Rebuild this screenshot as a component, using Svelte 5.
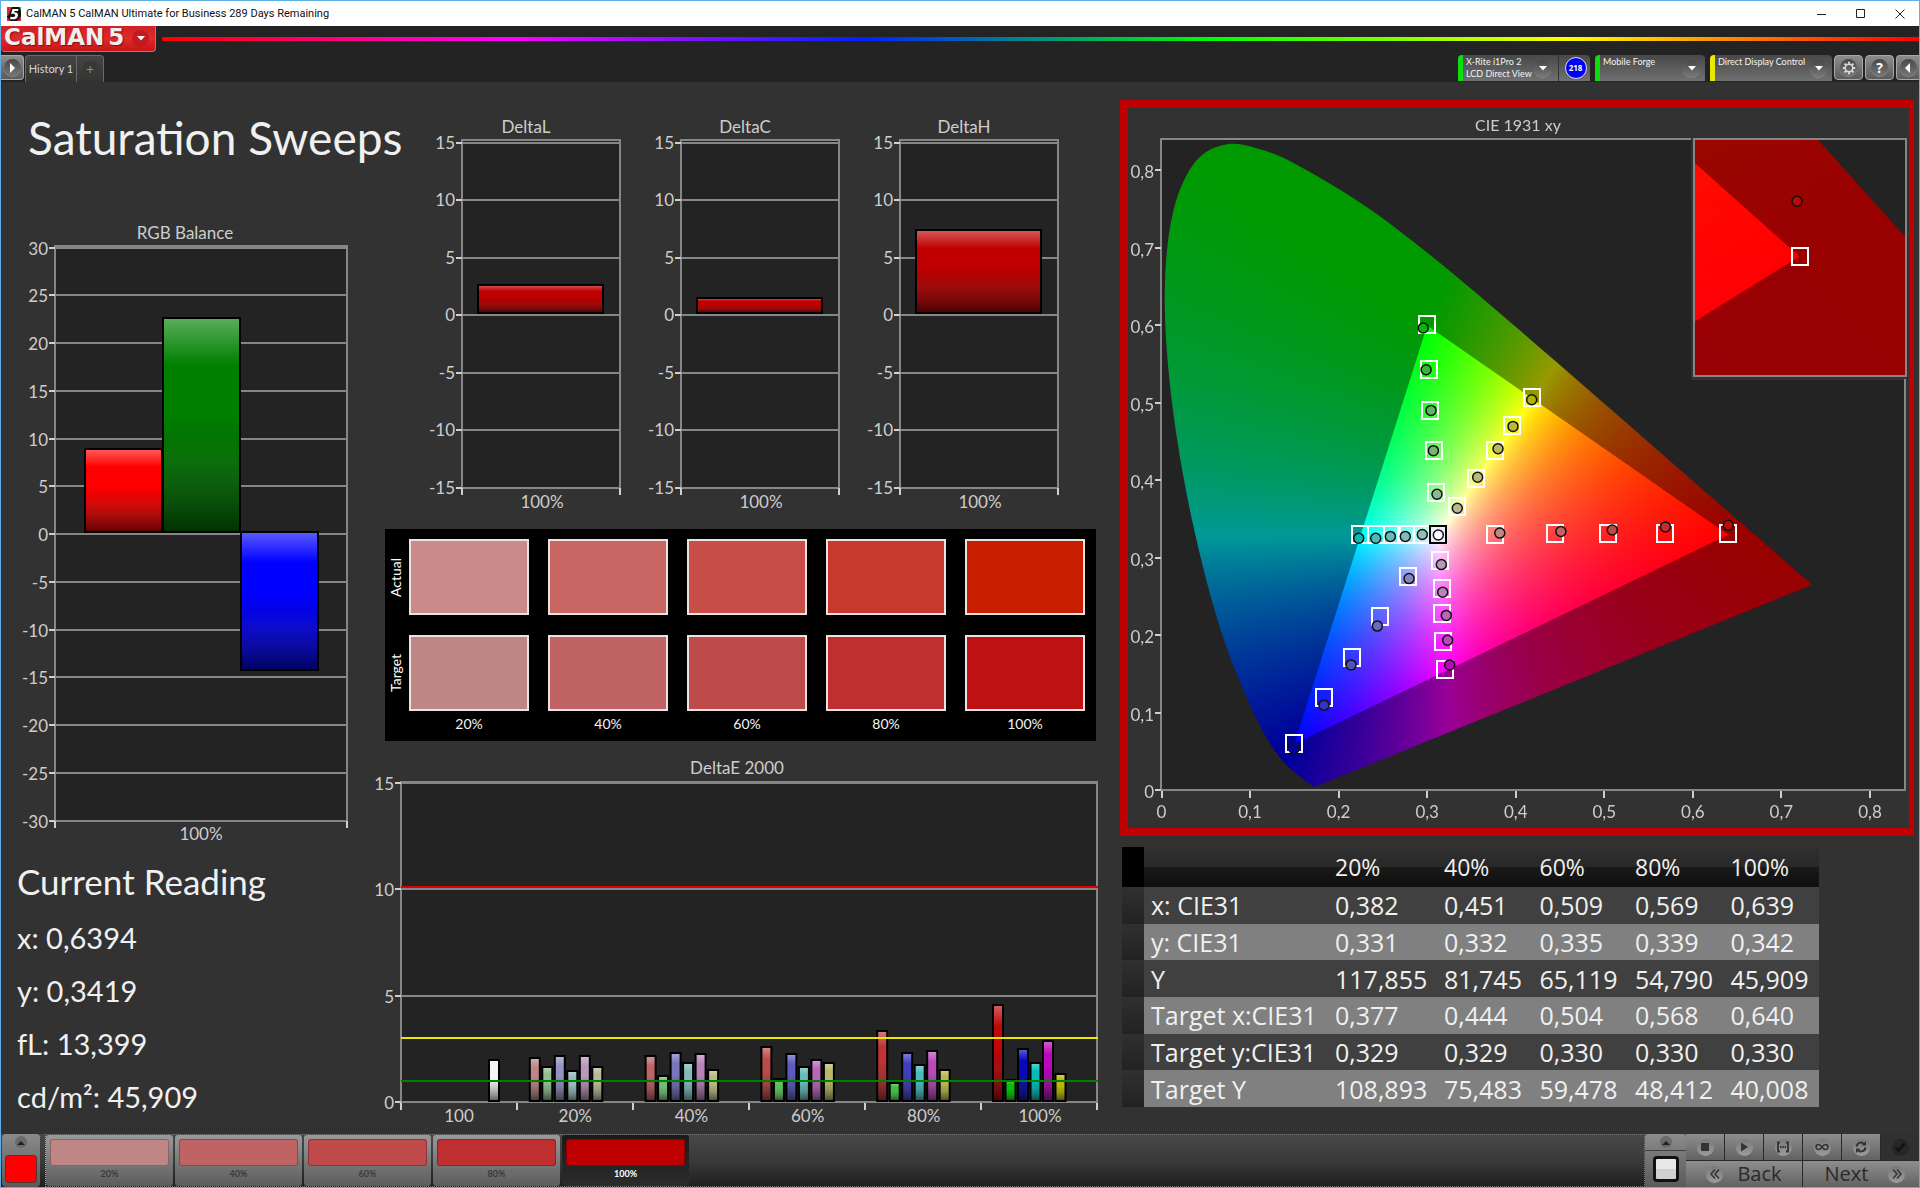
<script>
  import { onMount } from 'svelte';

  const saturations = ['20%', '40%', '60%', '80%', '100%'];
  const actualColors = ['#c98b89', '#c86664', '#c94e49', '#c7382e', '#c81f00'];
  const targetColors = ['#bf8686', '#bf6364', '#be4a4a', '#bf2f30', '#be1113'];

  const ticks = (from, to, step) => {
    const list = [];
    for (let v = from; v >= to; v -= step) list.push(v);
    return list;
  };

  const rgbTicks = ticks(30, -30, 5);
  const rgbY = (v) => Math.round(312 - v * 9.55);
  const rgbBars = [
    { x: 85, value: 8.9, color: '#ff0000' },
    { x: 163, value: 22.6, color: '#008000' },
    { x: 241, value: -14.4, color: '#0000ff' }
  ];

  const deltaTicks = ticks(15, -15, 5);
  const deltaY = (v) => Math.round(200 - v * 11.5);
  const deltas = [
    { name: 'DeltaL', value: 2.65 },
    { name: 'DeltaC', value: 1.45 },
    { name: 'DeltaH', value: 7.35 }
  ];

  const deY = (v) => Math.round(351 - v * 21.27);
  const deGroups = [
    { label: '100', values: [0, 0, 0, 0, 0, 0, 1.99], colors: ['', '', '', '', '', '', '#f4f4f4'] },
    { label: '20%', values: [2.07, 1.63, 2.15, 1.47, 2.15, 1.63], colors: ['#be8686', '#92bc92', '#9494c2', '#98babb', '#ba98ba', '#b8b898'] },
    { label: '40%', values: [2.15, 1.24, 2.32, 1.82, 2.24, 1.49], colors: ['#be6464', '#74bc74', '#7676be', '#82babb', '#ba82ba', '#b8b882'] },
    { label: '60%', values: [2.57, 1.07, 2.24, 1.63, 1.99, 1.82], colors: ['#be4b4b', '#5cbc5c', '#5c5cbe', '#66babb', '#ba66ba', '#b8b866'] },
    { label: '80%', values: [3.32, 0.91, 2.32, 1.72, 2.38, 1.49], colors: ['#be3535', '#44bc44', '#4040be', '#4ababb', '#ba4aba', '#b8b84a'] },
    { label: '100%', values: [4.56, 1.02, 2.49, 1.82, 2.87, 1.32], colors: ['#be0808', '#08bc08', '#0808be', '#08babb', '#ba08ba', '#b8b808'] }
  ];

  const rows = [
    ['x: CIE31', '0,382', '0,451', '0,509', '0,569', '0,639'],
    ['y: CIE31', '0,331', '0,332', '0,335', '0,339', '0,342'],
    ['Y', '117,855', '81,745', '65,119', '54,790', '45,909'],
    ['Target x:CIE31', '0,377', '0,444', '0,504', '0,568', '0,640'],
    ['Target y:CIE31', '0,329', '0,329', '0,330', '0,330', '0,330'],
    ['Target Y', '108,893', '75,483', '59,478', '48,412', '40,008']
  ];

  // Chromaticity plot: origin and scale of the diagram and of its magnified inset.
  const W = 781;
  const H = 720;
  const main = { px: (x) => 33.5 + x * 885.6, py: (y) => 682.4 - y * 775, ix: (p) => (p - 33.5) / 885.6, iy: (p) => (682.4 - p) / 775 };
  const zoomed = { px: (x) => 671.5 + (x - 0.64) * 4130, py: (y) => 148.5 - (y - 0.33) * 4650, ix: (p) => 0.64 + (p - 671.5) / 4130, iy: (p) => 0.33 + (148.5 - p) / 4650 };
  const inset = { x: 566, y: 31, w: 212, h: 237 };
  const cieX = [0, 1, 2, 3, 4, 5, 6, 7, 8];
  const tenth = (n) => (n === 0 ? '0' : `0,${n}`);

  const locus = [
    [0.1741, 0.005], [0.1714, 0.0051], [0.1644, 0.0109], [0.1566, 0.0177], [0.144, 0.0297], [0.1355, 0.0399],
    [0.1241, 0.0578], [0.1096, 0.0868], [0.0913, 0.1327], [0.0687, 0.2007], [0.0454, 0.295], [0.0235, 0.4127],
    [0.0082, 0.5384], [0.0039, 0.6548], [0.0139, 0.7502], [0.0389, 0.812], [0.0743, 0.8338], [0.1142, 0.8262],
    [0.1547, 0.8059], [0.2296, 0.7543], [0.3016, 0.6923], [0.3731, 0.6245], [0.4441, 0.5547], [0.5125, 0.4866],
    [0.5752, 0.4242], [0.627, 0.3725], [0.6658, 0.334], [0.6915, 0.3083], [0.719, 0.2809], [0.7347, 0.2653]
  ];
  const gamut = [[0.64, 0.33], [0.3, 0.6], [0.15, 0.06]];

  const targets = [
    [0.3, 0.6], [0.3017, 0.542], [0.3035, 0.49], [0.3074, 0.438], [0.3096, 0.384],
    [0.4187, 0.506], [0.3954, 0.47], [0.3766, 0.438], [0.3551, 0.4015], [0.3337, 0.3658],
    [0.377, 0.329], [0.444, 0.331], [0.504, 0.331], [0.568, 0.331], [0.64, 0.331],
    [0.2241, 0.329], [0.2419, 0.329], [0.26, 0.329], [0.2764, 0.329], [0.2945, 0.329],
    [0.3141, 0.2958], [0.3164, 0.26], [0.3164, 0.2276], [0.3182, 0.1913], [0.3197, 0.1557],
    [0.2787, 0.2751], [0.2471, 0.2232], [0.2155, 0.1713], [0.1838, 0.1194], [0.15, 0.06]
  ];
  const readings = [
    [0.2955, 0.5966, '#08b408'], [0.2988, 0.5428, '#3cb43c'], [0.3043, 0.4903, '#5cb85c'], [0.307, 0.4384, '#74b474'], [0.3111, 0.3821, '#92b892'],
    [0.418, 0.5041, '#b4b400'], [0.3969, 0.4697, '#b8b83c'], [0.38, 0.4409, '#b8b85c'], [0.357, 0.404, '#b8b882'], [0.334, 0.364, '#b8b898'],
    [0.382, 0.332, '#bf8686'], [0.451, 0.334, '#bf6364'], [0.509, 0.336, '#be4a4a'], [0.569, 0.34, '#bf2f30'], [0.64, 0.342, '#be0808'],
    [0.2227, 0.3252, '#08babb'], [0.2419, 0.3252, '#4ababb'], [0.2584, 0.3277, '#66babb'], [0.2753, 0.3277, '#82babb'], [0.2945, 0.3302, '#98babb'],
    [0.316, 0.2914, '#ba98ba'], [0.3175, 0.2557, '#ba82ba'], [0.3216, 0.2258, '#ba66ba'], [0.3231, 0.1938, '#ba4aba'], [0.3254, 0.1619, '#ba08ba'],
    [0.2795, 0.2733, '#8686be'], [0.2437, 0.212, '#6a6abe'], [0.214, 0.1619, '#5050be'], [0.1835, 0.11, '#3434be'], [0.1496, 0.0538, '#0000a8']
  ];

  let canvas;

  function xyToRgb(x, y) {
    const z = 1 - x - y;
    const r = Math.max(0, 3.2406 * x - 1.5372 * y - 0.4986 * z);
    const g = Math.max(0, -0.9689 * x + 1.8758 * y + 0.0415 * z);
    const b = Math.max(0, 0.0557 * x - 0.204 * y + 1.057 * z);
    const m = Math.max(r, g, b, 0.0001);
    return [r / m, g / m, b / m];
  }

  function shade(view, level) {
    const layer = document.createElement('canvas');
    layer.width = W;
    layer.height = H;
    const c = layer.getContext('2d');
    const data = c.createImageData(W, H);
    let i = 0;
    for (let row = 0; row < H; row++) {
      for (let col = 0; col < W; col++) {
        const rgb = xyToRgb(view.ix(col + 0.5), view.iy(row + 0.5));
        data.data[i++] = rgb[0] * level;
        data.data[i++] = rgb[1] * level;
        data.data[i++] = rgb[2] * level;
        data.data[i++] = 255;
      }
    }
    c.putImageData(data, 0, 0);
    return layer;
  }

  function traceLocus(c, view) {
    const p = locus.map(([x, y]) => [view.px(x), view.py(y)]);
    c.beginPath();
    c.moveTo(p[0][0], p[0][1]);
    for (let i = 0; i < p.length - 1; i++) {
      const a = p[Math.max(0, i - 1)];
      const b = p[i];
      const d = p[i + 1];
      const e = p[Math.min(p.length - 1, i + 2)];
      c.bezierCurveTo(b[0] + (d[0] - a[0]) / 6, b[1] + (d[1] - a[1]) / 6, d[0] - (e[0] - b[0]) / 6, d[1] - (e[1] - b[1]) / 6, d[0], d[1]);
    }
    c.closePath();
  }

  function traceGamut(c, view) {
    c.beginPath();
    gamut.forEach(([x, y], i) => (i ? c.lineTo(view.px(x), view.py(y)) : c.moveTo(view.px(x), view.py(y))));
    c.closePath();
  }

  function paint(c, view) {
    for (const [trace, level] of [[traceLocus, 153], [traceGamut, 255]]) {
      c.save();
      trace(c, view);
      c.clip();
      c.drawImage(shade(view, level), 0, 0);
      c.restore();
    }
  }

  onMount(() => {
    const c = canvas.getContext('2d');
    c.fillStyle = '#232323';
    c.fillRect(33, 31, 744, 652);
    paint(c, main);
    c.fillStyle = '#323232';
    c.fillRect(inset.x - 3, inset.y - 2, inset.w + 6, inset.h + 6);
    c.save();
    c.beginPath();
    c.rect(inset.x, inset.y, inset.w, inset.h);
    c.clip();
    c.fillStyle = '#232323';
    c.fillRect(inset.x, inset.y, inset.w, inset.h);
    paint(c, zoomed);
    c.restore();
  });
</script>

{#snippet bar(x, y, w, h, color)}
  <rect {x} {y} width={w} height={h} fill={color} />
  <rect {x} {y} width={w} height={h} fill="url(#gloss)" stroke="#000" stroke-width="2" />
{/snippet}

<svg class="defs" width="0" height="0" aria-hidden="true">
  <defs>
    <linearGradient id="gloss" x1="0" y1="0" x2="0" y2="1">
      <stop offset="0" stop-color="#fff" stop-opacity=".36" />
      <stop offset=".22" stop-color="#fff" stop-opacity="0" />
      <stop offset=".45" stop-color="#000" stop-opacity="0" />
      <stop offset=".65" stop-color="#333" stop-opacity=".2" />
      <stop offset="1" stop-color="#000" stop-opacity=".62" />
    </linearGradient>
  </defs>
</svg>

<div class="window">
  <header class="titlebar">
    <svg class="appicon" width="14" height="14" viewBox="0 0 14 14" aria-hidden="true">
      <rect width="14" height="14" fill="#111" />
      <path d="M0 0h5L1 9H0zM0 14v-4l4 4z" fill="#d8283c" />
      <path d="M14 14h-4l4-5z" fill="#c22a2a" />
      <path d="M14 0v4l-2-4z" fill="#36a852" />
      <path d="M11.500 2H5.500L4 7.200c1.500-.7 4.500-.6 4.200 1.300-.2 1.600-2.500 1.900-4.700 1.200L3 12c4 1 7.600 0 8-3.500.3-2.300-1.600-3.400-3.900-3.200l.3-1.200h3.500z" fill="#fff" />
    </svg>
    <span class="caption">CalMAN 5 CalMAN Ultimate for Business 289 Days Remaining</span>
    <button class="sys" aria-label="Minimize"><svg width="12" height="12" viewBox="0 0 12 12"><path d="M1 6.500h9" /></svg></button>
    <button class="sys" aria-label="Maximize"><svg width="12" height="12" viewBox="0 0 12 12"><path d="M1.500 1.500h8v8h-8z" /></svg></button>
    <button class="sys" aria-label="Close"><svg width="12" height="12" viewBox="0 0 12 12"><path d="M1.500 1.500l9 9M10.500 1.500l-9 9" /></svg></button>
  </header>

  <div class="brandbar">
    <button class="brand">
      <span>CalMAN</span><span>5</span>
      <i class="round"><svg width="10" height="6" viewBox="0 0 10 6"><path d="M1 1h8L5 5.500z" fill="#fff" /></svg></i>
    </button>
    <div class="spectrum"></div>
  </div>

  <div class="tabbar">
    <button class="square expand" aria-label="Expand"><i class="round"><svg width="8" height="10" viewBox="0 0 8 10"><path d="M2 0l5 5-5 5z" fill="#fff" /></svg></i></button>
    <button class="tab">History 1</button>
    <button class="tab add" aria-label="Add history"><i class="round dark">+</i></button>
    <div class="spacer"></div>
    <button class="device meter">
      <span class="names">X-Rite i1Pro 2<br />LCD Direct View</span>
      <i class="round"><svg width="10" height="6" viewBox="0 0 10 6"><path d="M1 1h8L5 5.500z" fill="#fff" /></svg></i>
    </button>
    <button class="count"><span>218</span></button>
    <button class="device source">
      <span class="names">Mobile Forge</span>
      <i class="round"><svg width="10" height="6" viewBox="0 0 10 6"><path d="M1 1h8L5 5.500z" fill="#fff" /></svg></i>
    </button>
    <button class="device display">
      <span class="names">Direct Display Control</span>
      <i class="round"><svg width="10" height="6" viewBox="0 0 10 6"><path d="M1 1h8L5 5.500z" fill="#fff" /></svg></i>
    </button>
    <button class="square" aria-label="Settings"><i class="round"><svg width="14" height="14" viewBox="0 0 14 14" fill="none" stroke="#ddd"><circle cx="7" cy="7" r="3.800" stroke-width="1.500" /><path d="M7 .8v2M7 11.200v2M.8 7h2M11.200 7h2M2.600 2.600L4 4M10 10l1.400 1.400M2.600 11.400L4 10M10 4l1.400-1.400" stroke-width="2" /></svg></i></button>
    <button class="square" aria-label="Help"><i class="round help">?</i></button>
    <button class="square collapse" aria-label="Collapse"><i class="round"><svg width="8" height="10" viewBox="0 0 8 10"><path d="M6 0L1 5l5 5z" fill="#fff" /></svg></i></button>
  </div>

  <main>
    <section class="left">
      <h1>Saturation Sweeps</h1>
      <svg class="chart rgb" viewBox="0 0 369 632" role="img" aria-label="RGB Balance">
        <rect x="54" y="24" width="292" height="575" class="plot" />
        <text x="184" y="17" class="mid">RGB Balance</text>
        {#each rgbTicks as t}
          <path d="M54 {rgbY(t)}H346" class="grid" />
          <path d="M48 {rgbY(t)}h6" class="tick" />
          <text x="47" y={rgbY(t) + 7} class="end">{t}</text>
        {/each}
        {#each rgbBars as b}
          {@render bar(b.x - 1, b.value > 0 ? rgbY(b.value) : rgbY(0) - 2, 77, Math.round(Math.abs(b.value) * 9.55) - (b.value > 0 ? 2 : 0), b.color)}
        {/each}
        <path d="M54 599v7M346 599v7" class="tick" />
        <text x="200" y="618" class="mid">100%</text>
      </svg>
      <div class="reading">
        <h2>Current Reading</h2>
        <p>x: 0,6394</p>
        <p>y: 0,3419</p>
        <p>fL: 13,399</p>
        <p>cd/m²: 45,909</p>
      </div>
    </section>

    <section class="middle">
      <div class="deltas">
        {#each deltas as d}
          <svg class="chart" viewBox="0 0 219 400" role="img" aria-label={d.name}>
            <rect x="37" y="25" width="158" height="348" class="plot" />
            <text x="101" y="18" class="mid">{d.name}</text>
            {#each deltaTicks as t}
              <path d="M37 {deltaY(t)}H195" class="grid" />
              <path d="M31 {deltaY(t)}h6" class="tick" />
              <text x="30" y={deltaY(t) + 6} class="end">{t}</text>
            {/each}
            {@render bar(53, deltaY(d.value), 125, Math.round(d.value * 11.5) - 2, '#c00000')}
            <path d="M37 373v7M195 373v7" class="tick" />
            <text x="117" y="393" class="mid">100%</text>
          </svg>
        {/each}
      </div>

      <div class="swatches">
        <div class="row">
          <span class="vertical">Actual</span>
          {#each actualColors as c}<div class="swatch" style:background={c}></div>{/each}
        </div>
        <div class="row">
          <span class="vertical">Target</span>
          {#each targetColors as c}<div class="swatch" style:background={c}></div>{/each}
        </div>
        <div class="row labels">
          <span class="vertical"></span>
          {#each saturations as s}<span>{s}</span>{/each}
        </div>
      </div>

      <svg class="chart" viewBox="0 0 750 380" role="img" aria-label="DeltaE 2000">
        <rect x="31" y="31" width="696" height="320" class="plot" />
        <text x="367" y="23" class="mid">DeltaE 2000</text>
        {#each [15, 10, 5, 0] as t}
          <path d="M31 {deY(t)}H728" class="grid" />
          <path d="M25 {deY(t)}h6" class="tick" />
          <text x="24" y={deY(t) + 7} class="end">{t}</text>
        {/each}
        {#each deGroups as g, gi}
          {#each g.values as v, i}
            {#if v}{@render bar(44 + gi * 115.8 + i * 12.5, deY(v), 10, 350 - deY(v), g.colors[i])}{/if}
          {/each}
          <text x={89 + gi * 116.2} y="371" class="mid">{g.label}</text>
        {/each}
        {#each [0, 1, 2, 3, 4, 5, 6] as n}
          <path d="M{31 + n * 116} 352v7" class="tick" />
        {/each}
        <path d="M31 {deY(10) - 2}H728" stroke="#e00000" stroke-width="2" />
        <path d="M31 {deY(3)}H728" stroke="#e8e800" stroke-width="2" />
        <path d="M31 {deY(1)}H728" stroke="#008000" stroke-width="2" />
      </svg>
    </section>

    <section class="right">
      <div class="cie">
        <canvas bind:this={canvas} width={W} height={H}></canvas>
        <svg class="chart" viewBox="0 0 781 720" role="img" aria-label="CIE 1931 xy">
          <text x="390" y="23" class="mid caption-text">CIE 1931 xy</text>
          <path d="M563 31H33V682H777V271" class="frame" />
          <rect x={inset.x} y={inset.y} width={inset.w} height={inset.h} class="frame" />
          {#each cieX as n}
            <path d="M{Math.round(main.px(n / 10))} 683v7M27 {Math.round(main.py(n / 10))}h6" class="tick" />
            <text x={main.px(n / 10)} y="710" class="mid">{tenth(n)}</text>
            <text x="26" y={main.py(n / 10) + 8} class="end">{tenth(n)}</text>
          {/each}
          {#each targets as [x, y]}
            <rect x={Math.round(main.px(x)) - 8} y={Math.round(main.py(y)) - 9} width="16" height="17" class="target" />
          {/each}
          <rect x={Math.round(main.px(0.3122)) - 8} y={Math.round(main.py(0.329)) - 9} width="16" height="17" class="target white" />
          {#each readings as [x, y, color]}
            <circle cx={main.px(x)} cy={main.py(y)} r="5" fill={color} stroke="#111" stroke-width="1.5" />
          {/each}
          <circle cx={main.px(0.3126)} cy={main.py(0.3296)} r="5" fill="#fff" stroke="#111" stroke-width="1.5" />
          <rect x={Math.round(zoomed.px(0.64)) - 8} y={Math.round(zoomed.py(0.33)) - 9} width="16" height="17" class="target" />
          <circle cx={zoomed.px(0.6394)} cy={zoomed.py(0.3419)} r="5" fill="#be0808" stroke="#111" stroke-width="1.5" />
        </svg>
      </div>

      <table>
        <colgroup>
          <col class="c-strip" /><col class="c-name" /><col class="c-first" /><col /><col /><col /><col />
        </colgroup>
        <thead>
          <tr><td class="strip"></td><th></th>{#each saturations as s}<th scope="col">{s}</th>{/each}</tr>
        </thead>
        <tbody>
          {#each rows as r}
            <tr><td class="strip"></td><th scope="row">{r[0]}</th>{#each r.slice(1) as v}<td>{v}</td>{/each}</tr>
          {/each}
        </tbody>
      </table>
    </section>
  </main>

  <footer>
    <button class="current" aria-label="Current pattern">
      <i class="up"><svg width="8" height="5" viewBox="0 0 8 5"><path d="M0 5l4-4 4 4z" /></svg></i>
      <span class="chip"></span>
    </button>
    <div class="patterns">
      {#each saturations as s, i}
        <button class="pattern" class:active={i === 4}>
          <span class="fill" style:background={i === 4 ? '#c00000' : targetColors[i]}></span>
          <span>{s}</span>
        </button>
      {/each}
    </div>
    <div class="view">
      <button class="viewup" aria-label="Show patterns"><i class="up"><svg width="8" height="5" viewBox="0 0 8 5"><path d="M0 5l4-4 4 4z" /></svg></i></button>
      <button class="window-pattern" aria-label="Pattern window"><span></span></button>
    </div>
    <div class="controls">
      <div class="tools">
        <button aria-label="Stop"><i class="disc"><svg width="16" height="16" viewBox="0 0 16 16"><path d="M4 4h8v8H4z" fill="#333" /></svg></i></button>
        <button aria-label="Play"><i class="disc"><svg width="16" height="16" viewBox="0 0 16 16"><path d="M5 3.500l7 4.500-7 4.500z" fill="#333" /></svg></i></button>
        <button aria-label="Read series"><i class="disc"><svg width="16" height="16" viewBox="0 0 16 16" fill="none" stroke="#333" stroke-width="1.800"><path d="M5 3.500H3v9h2M11 3.500h2v9h-2M5 8h1.500M7.300 8h1.500M9.600 8H11" /></svg></i></button>
        <button aria-label="Read continuously"><i class="disc"><svg width="16" height="16" viewBox="0 0 16 16" fill="none" stroke="#333" stroke-width="1.600"><path d="M8 8C6.500 6 5.500 5.500 4.500 5.500a2.500 2.500 0 0 0 0 5C5.500 10.500 6.500 10 8 8s2.500-2.500 3.500-2.500a2.500 2.500 0 0 1 0 5C10.500 10.500 9.500 10 8 8z" /></svg></i></button>
        <button aria-label="Refresh"><i class="disc"><svg width="16" height="16" viewBox="0 0 16 16" fill="none" stroke="#333" stroke-width="2"><path d="M3.500 7.500A4.500 4.500 0 0 1 11 4.800M12.500 8.500A4.500 4.500 0 0 1 5 11.200" /><path d="M13 2v4.500H8.500zM3 14V9.500h4.500z" fill="#333" stroke="none" /></svg></i></button>
        <button class="off" aria-label="Accept"><i class="disc"><svg width="16" height="16" viewBox="0 0 16 16" fill="none" stroke="#111" stroke-width="2.500"><path d="M3.500 8.500l3 3L12.500 4.500" /></svg></i></button>
      </div>
      <div class="nav">
        <button><i class="disc"><svg width="14" height="14" viewBox="0 0 14 14" fill="none" stroke="#333" stroke-width="1.500"><path d="M7 2.500L3 7l4 4.500M11 2.500L7 7l4 4.500" /></svg></i><span>Back</span></button>
        <button><span>Next</span><i class="disc"><svg width="14" height="14" viewBox="0 0 14 14" fill="none" stroke="#333" stroke-width="1.500"><path d="M3 2.500L7 7l-4 4.500M7 2.500L11 7l-4 4.500" /></svg></i></button>
      </div>
    </div>
  </footer>
</div>

<style>
  :global(body) { margin: 0; background: #323232; }
  button { margin: 0; padding: 0; border: 0; background: none; color: inherit; font: inherit; cursor: pointer; }
  i { font-style: normal; }
  .defs { position: absolute; }

  .window {
    box-sizing: border-box;
    min-height: 100vh;
    display: flex;
    flex-direction: column;
    border: 1px solid #5eb0e4;
    background: #323232;
    color: #f0f0f0;
    font-family: Lato, "Open Sans", sans-serif;
    overflow: hidden;
  }

  .titlebar { display: flex; align-items: center; height: 25px; background: #fff; color: #111; font: 11px/16px Roboto, sans-serif; padding-left: 6px; }
  .caption { flex: 1; padding-left: 5px; }
  .sys { width: 39px; height: 24px; display: grid; place-items: center; }
  .sys svg { fill: none; stroke: #222; stroke-width: 1; }

  .brandbar { display: flex; height: 29px; background: #232323; }
  .brand {
    box-sizing: border-box;
    width: 155px; height: 26px; flex: none;
    display: flex; align-items: center; gap: 4px;
    padding: 0 0 4px 3px;
    border: solid #9a8080; border-width: 0 1px 1px 0;
    border-radius: 0 0 4px 4px;
    background: linear-gradient(#cf2126, #e02a2c 50%, #c81418);
    color: #f0eeee;
    font: bold 23px/22px "DejaVu Sans", sans-serif;
    text-shadow: 1px 1px 1px #7a1010;
  }
  .brand .round { background: #c41a1e; box-shadow: none; margin: 3px 0 0 4px; }
  .spectrum { flex: 1; height: 4px; margin: 11px 0 0 6px; background: linear-gradient(90deg, #f00, #f0f 20%, #02f 40%, #0f0 60%, #ff0 80%, #f00); }

  .round { flex: none; display: inline-grid; place-items: center; width: 17px; height: 17px; border-radius: 50%; background: linear-gradient(#484848, #777); box-shadow: 0 1px 0 #8a8a8a; }
  .round.dark { background: #383838; box-shadow: none; color: #8a8a8a; font: 14px/14px Lato, sans-serif; }
  .round.help { color: #fff; font: bold 14px/16px "Open Sans", sans-serif; }

  .tabbar { display: flex; align-items: flex-start; height: 27px; padding-top: 0; background: #232323; font-size: 11px; line-height: 12px; }
  .spacer { flex: 1; }
  .square { box-sizing: border-box; width: 29px; height: 25px; margin-right: 2px; border: 1px solid #a8a8a8; border-radius: 4px; background: linear-gradient(#8c8c8c, #5c5c5c); display: grid; place-items: center; }
  .square.expand { width: 23px; border-left: 0; border-radius: 0 4px 4px 0; margin-right: 1px; }
  .square.collapse { width: 23px; margin-right: 0; border-right: 0; border-radius: 4px 0 0 4px; }
  .tab { box-sizing: border-box; width: 51px; height: 27px; border: solid #6a6a6a; border-width: 1px 0 0 1px; border-radius: 4px 0 0 0; background: linear-gradient(#454545, #333); color: #d8d8d8; white-space: nowrap; }
  .tab.add { width: 28px; border-width: 1px 1px 0 1px; border-radius: 0 4px 0 0; }
  .device { box-sizing: border-box; height: 26px; display: flex; align-items: center; justify-content: space-between; padding: 0 5px 0 3px; margin-right: 5px; border-left: 5px solid #0ddc0d; border-radius: 4px 4px 0 0; background: linear-gradient(#484848, #707070); text-align: left; color: #f4f4f4; }
  .names { align-self: flex-start; white-space: nowrap; font-size: 9px; line-height: 12px; padding-top: 1px; }
  .device.meter { width: 101px; margin-right: 0; border-right: 1px solid #333; border-radius: 4px 0 0 0; padding-right: 7px; }
  .device.source { width: 110px; }
  .device.display { width: 122px; border-left-color: #e8e800; margin-right: 2px; }
  .count { width: 31px; height: 26px; margin-right: 5px; padding-left: 2px; border-radius: 0 4px 0 0; background: linear-gradient(#484848, #707070); display: grid; place-items: center; }
  .count span { box-sizing: border-box; width: 22px; height: 22px; border: 1px solid #d8d8ff; border-radius: 50%; background: #0000f4; color: #fff; font: bold 8px/20px "Open Sans", sans-serif; }

  main { flex: 1; display: grid; grid-template-columns: minmax(0, 369fr) minmax(0, 750fr) minmax(0, 799fr); align-items: start; }
  .chart { display: block; width: 100%; height: auto; font-size: 17px; fill: #cdcdcd; }
  .caption-text { font-size: 16px; }
  .plot { fill: #232323; stroke: #868686; stroke-width: 2; }
  .grid { stroke: #868686; stroke-width: 2; }
  .tick { stroke: #cfcfcf; stroke-width: 2; }
  .frame { fill: none; stroke: #868686; stroke-width: 2; }
  .mid { text-anchor: middle; }
  .end { text-anchor: end; }

  h1, h2, p { margin: 0; font-weight: 400; white-space: nowrap; }
  h1 { padding: 26px 0 0 27px; font-size: 46px; line-height: 60px; }
  .rgb { margin-top: 54px; }
  .reading { padding: 5px 0 0 16px; }
  h2 { font-size: 35px; line-height: 44px; margin-bottom: 8px; }
  p { font-size: 29px; line-height: 53px; }

  .deltas { display: grid; grid-template-columns: repeat(3, minmax(0, 1fr)); padding: 33px 38px 0 55px; }
  .swatches { margin: 14px 24px 10px 15px; padding: 10px 11px 10px 5px; background: #000; }
  .row { display: grid; grid-template-columns: 0 repeat(5, minmax(0, 1fr)); column-gap: 19px; margin-bottom: 20px; }
  .swatch { box-sizing: border-box; height: 76px; border: 2px solid #ece2e2; }
  .vertical { width: 12px; writing-mode: vertical-rl; transform: rotate(180deg); text-align: center; font-size: 14px; line-height: 12px; color: #fff; }
  .labels { margin: -15px 0 0; font-size: 14px; line-height: 15px; text-align: center; color: #f4f4f4; }

  .cie { display: grid; margin: 18px 5px 0 0; border: 8px solid #c00000; border-right-width: 5px; }
  .cie > canvas, .cie > svg { grid-area: 1 / 1; width: 100%; height: auto; }
  .target { fill: none; stroke: #fff; stroke-width: 2; }
  .target.white { stroke: #000; fill: #eef; }

  table { width: calc(100% - 102px); height: 260px; margin: 11px 0 0 2px; border-collapse: collapse; table-layout: fixed; font: 25px/30px "Open Sans", sans-serif; }
  .c-strip { width: 22px; }
  .c-name { width: 184px; }
  .c-first { width: 109px; }
  th, td { padding: 0 0 0 7px; font-weight: 400; text-align: left; white-space: nowrap; }
  thead tr { height: 40px; background: linear-gradient(#303030, #282828 50%, #1a1a1a 50%, #0e0e0e); }
  thead th { font-size: 23px; }
  tbody tr { background: #404040; }
  tbody tr:nth-child(even) { background: #808080; }
  .strip { padding: 0; background: linear-gradient(#303030, #222); }
  thead .strip { background: #000; }

  footer { display: flex; height: 53px; background: linear-gradient(#484848, #3a3a3a 50%, #1e1e1e); color: #222; }
  .current { box-sizing: border-box; width: 38px; margin: 0 5px 0 1px; border-radius: 4px; background: linear-gradient(#8a8a8a, #5a5a5a); display: flex; flex-direction: column; align-items: center; justify-content: space-between; padding: 2px 0 5px; }
  .chip { width: 30px; height: 26px; border-radius: 3px; background: #f00; box-shadow: 0 0 0 1px #5a3030; }
  .up { display: grid; place-items: center; width: 12px; height: 12px; border-radius: 50%; background: #6a6a6a; }
  .up svg { fill: #222; }
  .patterns { flex: 1; display: flex; border: 1px dotted #777; border-left-color: #aaa; }
  .pattern { box-sizing: border-box; width: 127px; margin-right: 2px; padding: 4px; display: flex; flex-direction: column; align-items: center; background: linear-gradient(#9a9a9a, #5c5c5c); border-radius: 3px; font-size: 9px; line-height: 16px; font-weight: 700; color: #3a3a3a; }
  .pattern.active { background: linear-gradient(#1a1a1a, #2c2c2c); color: #fff; }
  .fill { box-sizing: border-box; width: 100%; height: 31px; border-radius: 3px; border: 1px solid #00000044; }
  .view { width: 41px; display: flex; flex-direction: column; gap: 1px; }
  .viewup { height: 16px; background: linear-gradient(#8c8c8c, #7c7c7c); border-radius: 3px 3px 0 0; display: grid; place-items: center; }
  .window-pattern { flex: 1; background: linear-gradient(#7a7a7a, #5a5a5a); display: grid; place-items: center; }
  .window-pattern span { width: 20px; height: 20px; border: 3px solid #111; border-radius: 4px; background: linear-gradient(#e8e8e8 50%, #d0d0d0 50%); }
  .controls { width: 233px; display: flex; flex-direction: column; gap: 1px; background: #2a2a2a; }
  .tools { display: grid; grid-template-columns: repeat(6, 1fr); gap: 1px; height: 26px; }
  .tools button, .nav button { background: linear-gradient(#8e8e8e, #626262); display: flex; align-items: center; justify-content: center; }
  .tools .off { background: #303030; }
  .off .disc { background: #262626; }
  .disc { flex: none; display: grid; place-items: center; width: 17px; height: 17px; border-radius: 50%; background: linear-gradient(#787878, #9c9c9c); }
  .nav { flex: 1; display: grid; grid-template-columns: 1fr 1fr; gap: 1px; font: 20px/24px "Open Sans", sans-serif; color: #2a2a2a; }
  .nav button { gap: 14px; }
  .nav button:last-child { gap: 20px; padding-left: 8px; }
</style>
